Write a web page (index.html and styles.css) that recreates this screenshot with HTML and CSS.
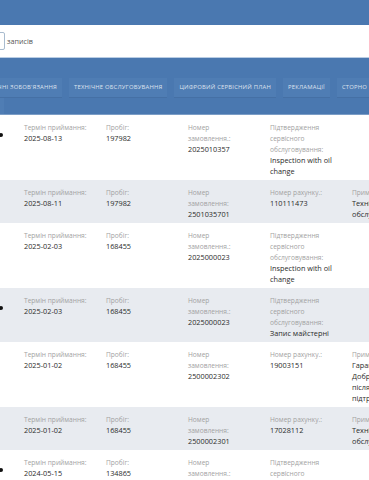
FILE: index.html
```html
<!DOCTYPE html>
<html lang="uk">
<head>
  <meta charset="UTF-8" />
  <meta name="viewport" content="width=device-width, initial-scale=1.0"/>
  <title>Історія обслуговування</title>
  <link rel="stylesheet" href="styles.css">
</head>
<body>
  <div class="topbar"></div>

  <div class="toolbar">
    <span class="page-select"></span>
    <span class="page-label">записів</span>
  </div>

  <!-- Tabs -->
  <nav class="tabs">
    <div class="tabs-row">
      <div class="tab-clip wide"><a class="tab">Гарантійні технічні зобов'язання</a></div>
      <a class="tab">Технічне обслуговування</a>
      <a class="tab">Цифровий сервісний план</a>
      <a class="tab">Рекламації</a>
      <a class="tab">Сторно</a>
    </div>
    <div class="tabs-row">
      <div class="tab-clip narrow"><a class="tab">Архів</a><a class="tab">Ремонт і гарантійне сервісне обслуговування</a></div>
    </div>
  </nav>

  <!-- Orders -->
  <div class="orders">
    <div class="order">
      <div class="mark"><span class="dot"></span></div>
      <div class="field"><div class="label">Термін приймання:</div><div class="value">2025-08-13</div></div>
      <div class="field"><div class="label">Пробіг:</div><div class="value">197982</div></div>
      <div class="field"><div class="label">Номер замовлення.:</div><div class="value">2025010357</div></div>
      <div class="field"><div class="label">Підтвердження сервісного обслуговування:</div><div class="value">Inspection with oil change</div></div>
      <div class="field"></div>
    </div>

    <div class="order">
      <div class="mark"></div>
      <div class="field"><div class="label">Термін приймання:</div><div class="value">2025-08-11</div></div>
      <div class="field"><div class="label">Пробіг:</div><div class="value">197982</div></div>
      <div class="field"><div class="label">Номер замовлення:</div><div class="value">2501035701</div></div>
      <div class="field"><div class="label">Номер рахунку.:</div><div class="value">110111473</div></div>
      <div class="field"><div class="label">Примітки:</div><div class="value">Технічне<br>обслуговування</div></div>
    </div>

    <div class="order">
      <div class="mark"></div>
      <div class="field"><div class="label">Термін приймання:</div><div class="value">2025-02-03</div></div>
      <div class="field"><div class="label">Пробіг:</div><div class="value">168455</div></div>
      <div class="field"><div class="label">Номер замовлення.:</div><div class="value">2025000023</div></div>
      <div class="field"><div class="label">Підтвердження сервісного обслуговування:</div><div class="value">Inspection with oil change</div></div>
      <div class="field"></div>
    </div>

    <div class="order">
      <div class="mark"><span class="dot"></span></div>
      <div class="field"><div class="label">Термін приймання:</div><div class="value">2025-02-03</div></div>
      <div class="field"><div class="label">Пробіг:</div><div class="value">168455</div></div>
      <div class="field"><div class="label">Номер замовлення.:</div><div class="value">2025000023</div></div>
      <div class="field"><div class="label">Підтвердження сервісного обслуговування:</div><div class="value">Запис майстерні</div></div>
      <div class="field"></div>
    </div>

    <div class="order">
      <div class="mark"></div>
      <div class="field"><div class="label">Термін приймання:</div><div class="value">2025-01-02</div></div>
      <div class="field"><div class="label">Пробіг:</div><div class="value">168455</div></div>
      <div class="field"><div class="label">Номер замовлення:</div><div class="value">2500002302</div></div>
      <div class="field"><div class="label">Номер рахунку.:</div><div class="value">19003151</div></div>
      <div class="field"><div class="label">Примітки:</div><div class="value">Гарантійний ремонт<br>Добрий день, роботи виконано<br>після звернення до служби<br>підтримки клієнтів</div></div>
    </div>

    <div class="order">
      <div class="mark"></div>
      <div class="field"><div class="label">Термін приймання:</div><div class="value">2025-01-02</div></div>
      <div class="field"><div class="label">Пробіг:</div><div class="value">168455</div></div>
      <div class="field"><div class="label">Номер замовлення:</div><div class="value">2500002301</div></div>
      <div class="field"><div class="label">Номер рахунку.:</div><div class="value">17028112</div></div>
      <div class="field"><div class="label">Примітки:</div><div class="value">Технічне<br>обслуговування</div></div>
    </div>

    <div class="order">
      <div class="mark"><span class="dot"></span></div>
      <div class="field"><div class="label">Термін приймання:</div><div class="value">2024-05-15</div></div>
      <div class="field"><div class="label">Пробіг:</div><div class="value">134865</div></div>
      <div class="field"><div class="label">Номер замовлення.:</div><div class="value">2024006736</div></div>
      <div class="field"><div class="label">Підтвердження сервісного обслуговування:</div><div class="value">Inspection with oil change</div></div>
      <div class="field"></div>
    </div>
  </div>
</body>
</html>
```

FILE: styles.css
```css
:root {
  --blue: #4a78b0;
  --blue-tab: #4f7db4;
  --row-alt: #e8ebf0;
  --text-dark: #2b2b2b;
  --text-muted: #a2a2a2;
}

* { margin: 0; padding: 0; box-sizing: border-box; }

body {
  font-family: 'Open Sans', 'DejaVu Sans', sans-serif;
  background: #fff;
  overflow: hidden;
}

.topbar {
  height: 25px;
  background: var(--blue);
}

/* page size selector */
.toolbar {
  height: 33px;
  display: flex;
  align-items: center;
  gap: 2px;
  border-bottom: 1px solid #b9cde4;
}
.page-select {
  width: 30px; height: 18px;
  margin-left: -25px;
  border: 1px solid #a9bccf;
  border-radius: 2px;
}
.page-label {
  font-size: 7.2px;
  color: #555;
}

/* tabs */
.tabs {
  background: var(--blue);
  padding-top: 20px;
  height: 57px;
  border-bottom: 1px solid #7b9dc6;
  overflow: hidden;
}
.tabs-row {
  display: flex;
  gap: 7px;
  white-space: nowrap;
  margin-bottom: 1px;
}
.tab-clip {
  display: flex;
  justify-content: flex-end;
  gap: 7px;
  flex: none;
}
.tab-clip.wide { width: 62px; }
.tab-clip.narrow { width: 4px; }
.tab {
  display: block;
  flex: none;
  height: 19px;
  line-height: 19px;
  padding: 0 5px;
  background: var(--blue-tab);
  box-shadow: 0 1px 0 rgba(0,0,0,0.06);
  color: rgba(255,255,255,0.8);
  font-size: 5.9px;
  letter-spacing: 0.2px;
  text-transform: uppercase;
}

/* order rows */
.order {
  display: grid;
  grid-template-columns: 24px 82px 82px 82px 82px 220px;
  padding: 7px 0 3px;
  line-height: 11px;
}
.order:nth-child(even) { background: var(--row-alt); }

.mark { display: flex; padding-top: 11px; }
.dot {
  width: 4px; height: 4px;
  margin-left: -1px;
  border-radius: 50%;
  background: #111;
}

.field { padding-right: 19px; }
.label {
  font-size: 6.6px;
  color: var(--text-muted);
}
.value {
  font-size: 7.3px;
  color: var(--text-dark);
}
```
